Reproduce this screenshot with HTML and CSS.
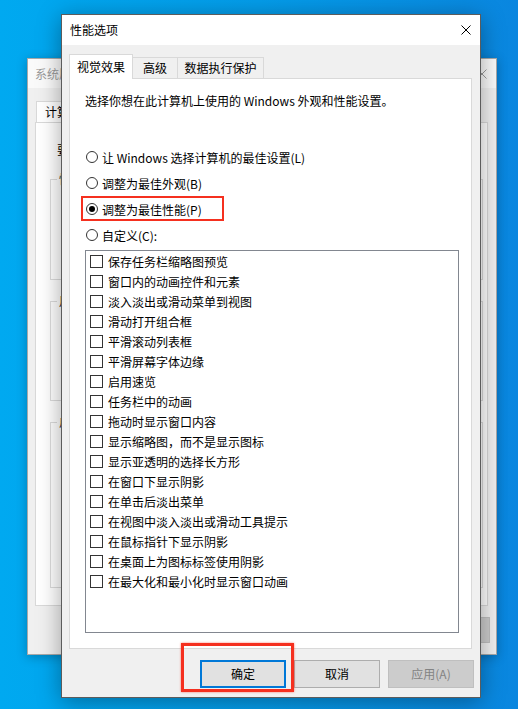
FILE: index.html
```html
<!DOCTYPE html>
<html lang="zh-CN">
  <head>
    <meta charset="UTF-8" />
    <title>性能选项</title>
    <link rel="stylesheet" href="styles.css">
  </head>
  <body>
    <div class="desktop">
      <!-- inactive window behind, mostly covered -->
      <div class="win back">
        <div class="back-title">
          <span>系统属性</span>
          <svg class="x" width="10" height="10" viewBox="0 0 10 10"><path d="M0.5 0.5 L9.5 9.5 M9.5 0.5 L0.5 9.5" stroke="#9a9a9a" stroke-width="1"/></svg>
        </div>
        <div class="back-body">
          <div class="back-tabs"><div class="back-tab">计算</div></div>
          <div class="back-panel">
            <p class="back-note">要</p>
            <fieldset class="group g1"><legend>性</legend></fieldset>
            <fieldset class="group g2"><legend>用</legend></fieldset>
            <fieldset class="group g3"><legend>启</legend></fieldset>
          </div>
          <div class="back-buttons">
            <div class="back-btn off"></div>
          </div>
        </div>
      </div>

      <!-- active dialog -->
      <div class="win dialog">
        <div class="title">
          <span>性能选项</span>
          <svg class="x" width="10" height="10" viewBox="0 0 10 10"><path d="M0.5 0.5 L9.5 9.5 M9.5 0.5 L0.5 9.5" stroke="#000" stroke-width="1"/></svg>
        </div>
        <div class="body">
          <div class="tabs">
            <div class="tab active">视觉效果</div>
            <div class="tab t2">高级</div>
            <div class="tab t3">数据执行保护</div>
          </div>
          <div class="panel">
            <p class="desc">选择你想在此计算机上使用的 Windows 外观和性能设置。</p>
            <div class="radios">
              <div class="radio"><span class="dot"></span>让 Windows 选择计算机的最佳设置(L)</div>
              <div class="radio"><span class="dot"></span>调整为最佳外观(B)</div>
              <div class="radio"><span class="dot on"></span>调整为最佳性能(P)</div>
              <div class="radio"><span class="dot"></span>自定义(C):</div>
            </div>
            <div class="list">
              <div class="item"><span class="box"></span>保存任务栏缩略图预览</div>
              <div class="item"><span class="box"></span>窗口内的动画控件和元素</div>
              <div class="item"><span class="box"></span>淡入淡出或滑动菜单到视图</div>
              <div class="item"><span class="box"></span>滑动打开组合框</div>
              <div class="item"><span class="box"></span>平滑滚动列表框</div>
              <div class="item"><span class="box"></span>平滑屏幕字体边缘</div>
              <div class="item"><span class="box"></span>启用速览</div>
              <div class="item"><span class="box"></span>任务栏中的动画</div>
              <div class="item"><span class="box"></span>拖动时显示窗口内容</div>
              <div class="item"><span class="box"></span>显示缩略图，而不是显示图标</div>
              <div class="item"><span class="box"></span>显示亚透明的选择长方形</div>
              <div class="item"><span class="box"></span>在窗口下显示阴影</div>
              <div class="item"><span class="box"></span>在单击后淡出菜单</div>
              <div class="item"><span class="box"></span>在视图中淡入淡出或滑动工具提示</div>
              <div class="item"><span class="box"></span>在鼠标指针下显示阴影</div>
              <div class="item"><span class="box"></span>在桌面上为图标标签使用阴影</div>
              <div class="item"><span class="box"></span>在最大化和最小化时显示窗口动画</div>
            </div>
          </div>
          <div class="buttons">
            <div class="btn default">确定</div>
            <div class="btn">取消</div>
            <div class="btn off">应用(A)</div>
          </div>
        </div>
      </div>

      <!-- red annotation frames -->
      <div class="mark mark-radio"></div>
      <div class="mark mark-ok"></div>
    </div>
  </body>
</html>
```

FILE: styles.css
```css
body {
  margin: 0;
  font-family: "Noto Sans CJK SC", "Noto Sans", sans-serif;
  font-size: 12px;
  color: #000;
}
.desktop {
  position: relative;
  width: 518px;
  height: 709px;
  overflow: hidden;
  background: linear-gradient(90deg, #00a9f0 0%, #049ce9 50%, #0a86df 100%);
}
.win {
  position: absolute;
  box-sizing: border-box;
  background: #f0f0f0;
}
p {
  margin: 0;
}

/* back window */
.back {
  left: 27px;
  top: 58px;
  width: 470px;
  height: 597px;
  border: 1px solid #a8a8a8;
  box-shadow: 0 2px 10px rgba(0, 0, 0, 0.25);
  display: flex;
  flex-direction: column;
}
.back-title {
  height: 29px;
  background: #fafafa;
  color: #999;
  display: flex;
  align-items: center;
  justify-content: space-between;
  padding: 0 9px 0 7px;
  line-height: 16px;
}
.back-body {
  flex: 1;
  padding: 13px 8px 0 7px;
  display: flex;
  flex-direction: column;
}
.back-tabs {
  display: flex;
  height: 21px;
}
.back-tab {
  margin-left: 1px;
  width: 60px;
  padding-left: 8px;
  background: #fff;
  border: 1px solid #d9d9d9;
  border-bottom: none;
  line-height: 20px;
}
.back-panel {
  height: 484px;
  box-sizing: border-box;
  background: #fff;
  border: 1px solid #d9d9d9;
  padding: 19px 4px 0 14px;
}
.back-note {
  margin-left: 7px;
  line-height: 16px;
}
.group {
  margin: 0;
  padding: 0;
  border: 1px solid #dcdcdc;
  box-sizing: border-box;
}
.group legend {
  padding: 0 2px;
  margin-left: 6px;
  color: #1a1a1a;
  line-height: 14px;
}
.g1 {
  margin-top: 14px;
  height: 108px;
}
.g2 {
  margin-top: 14px;
  height: 107px;
}
.g3 {
  margin-top: 14px;
  height: 173px;
}
.back-buttons {
  display: flex;
  justify-content: flex-end;
  margin-top: 11px;
  margin-right: -2px;
}
.back-btn {
  width: 70px;
  height: 26px;
  box-sizing: border-box;
  border: 1px solid #bfbfbf;
  background: #cccccc;
}

/* dialog */
.dialog {
  left: 61px;
  top: 14px;
  width: 420px;
  height: 684px;
  border: 1px solid #5c5c5c;
  box-shadow: 0 4px 22px rgba(0, 0, 0, 0.35);
  display: flex;
  flex-direction: column;
}
.title {
  height: 30px;
  background: #fff;
  display: flex;
  align-items: center;
  justify-content: space-between;
  padding: 0 9px 0 8px;
  line-height: 16px;
}
.body {
  flex: 1;
  padding: 9px 6px 9px 7px;
  display: flex;
  flex-direction: column;
}
.tabs {
  display: flex;
  align-items: flex-end;
  height: 24px;
  position: relative;
  z-index: 1;
}
.tab {
  height: 21px;
  box-sizing: border-box;
  border: 1px solid #d9d9d9;
  border-left: none;
  border-bottom: none;
  background: #f0f0f0;
  text-align: center;
  line-height: 20px;
}
.tab.active {
  width: 64px;
  height: 25px;
  margin-bottom: -1px;
  border-left: 1px solid #d9d9d9;
  background: #fff;
  line-height: 23px;
}
.t2 {
  width: 45px;
}
.t3 {
  width: 86px;
}
.panel {
  width: 403px;
  height: 571px;
  box-sizing: border-box;
  background: #fff;
  border: 1px solid #d9d9d9;
  padding: 14px 0 0 15px;
}
.desc {
  line-height: 16px;
}
.radios {
  margin-top: 35px;
}
.radio {
  height: 26px;
  display: flex;
  align-items: center;
}
.dot {
  width: 12px;
  height: 12px;
  box-sizing: border-box;
  border: 1px solid #333;
  border-radius: 50%;
  margin: 0 4px 0 1px;
  display: flex;
  align-items: center;
  justify-content: center;
}
.dot.on::after {
  content: "";
  width: 6px;
  height: 6px;
  border-radius: 50%;
  background: #000;
}
.list {
  margin-top: 2px;
  width: 374px;
  height: 383px;
  box-sizing: border-box;
  border: 1px solid #828790;
  padding: 0 0 0 4px;
}
.item {
  height: 20px;
  display: flex;
  align-items: center;
}
.box {
  width: 13px;
  height: 13px;
  box-sizing: border-box;
  border: 1px solid #333;
  background: #fff;
  margin-right: 5px;
}
.buttons {
  display: flex;
  justify-content: flex-end;
  gap: 8px;
  margin-top: 11px;
}
.btn {
  width: 86px;
  height: 28px;
  box-sizing: border-box;
  border: 1px solid #adadad;
  background: #e1e1e1;
  text-align: center;
  line-height: 26px;
}
.btn.default {
  border: 2px solid #0078d7;
  line-height: 24px;
}
.btn.off {
  background: #cccccc;
  border-color: #bfbfbf;
  color: #838383;
}

/* annotations */
.mark {
  position: absolute;
  box-sizing: border-box;
  border: 2px solid #f5301f;
}
.mark-radio {
  left: 81px;
  top: 196px;
  width: 143px;
  height: 25px;
}
.mark-ok {
  left: 181px;
  top: 643px;
  width: 113px;
  height: 49px;
  border-width: 3px;
  box-shadow: 0 0 2px rgba(255, 40, 20, 0.6);
}
```
